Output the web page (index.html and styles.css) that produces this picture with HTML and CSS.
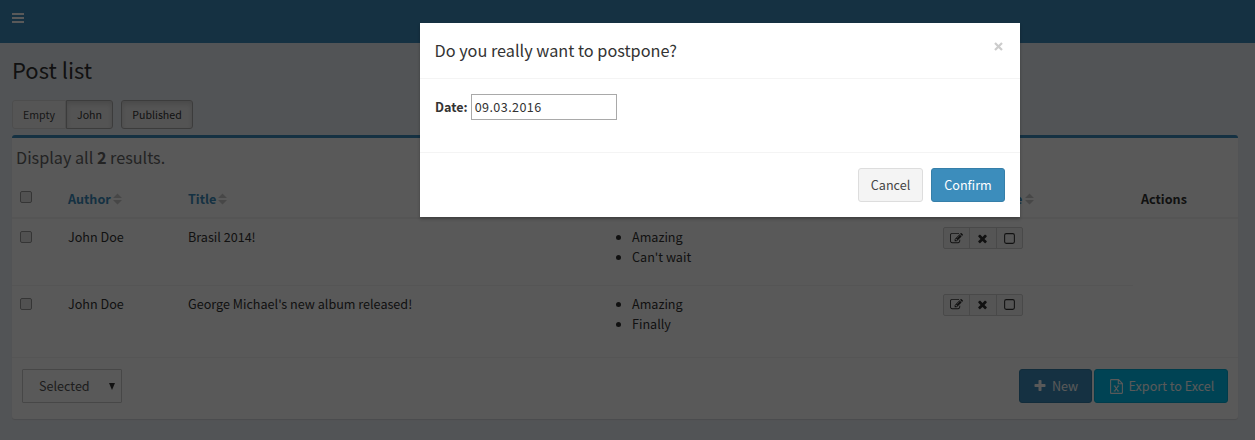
FILE: index.html
```html
<!DOCTYPE html>
<html lang="en">
<head>
<meta charset="utf-8">
<title>Post list</title>
<link rel="stylesheet" href="styles.css">
</head>
<body>
<svg class="sprite" aria-hidden="true">
  <symbol id="edit" viewBox="0 0 1792 1792"><path d="M888 1184l116-116-152-152-116 116v56h96v96h56zm440-720q-16-16-33 1l-350 350q-17 17-1 33t33-1l350-350q17-17 1-33zm80 594v190q0 119-84.500 203.500t-203.500 84.500h-832q-119 0-203.500-84.500t-84.500-203.500v-832q0-119 84.500-203.500t203.500-84.500h832q63 0 117 25 15 7 18 23 3 17-9 29l-49 49q-14 14-32 8-23-6-45-6h-832q-66 0-113 47t-47 113v832q0 66 47 113t113 47h832q66 0 113-47t47-113v-126q0-13 9-22l64-64q15-15 35-7t20 29zm-96-738l288 288-672 672h-288v-288zm444 132l-92 92-288-288 92-92q28-28 68-28t68 28l152 152q28 28 28 68t-28 68z"/></symbol>
  <symbol id="times" viewBox="0 0 1792 1792"><path d="M1490 1322q0 40-28 68l-136 136q-28 28-68 28t-68-28l-294-294-294 294q-28 28-68 28t-68-28l-136-136q-28-28-28-68t28-68l294-294-294-294q-28-28-28-68t28-68l136-136q28-28 68-28t68 28l294 294 294-294q28-28 68-28t68 28l136 136q28 28 28 68t-28 68l-294 294 294 294q28 28 28 68z"/></symbol>
  <symbol id="plus" viewBox="0 0 1792 1792"><path d="M1600 736v192q0 40-28 68t-68 28h-416v416q0 40-28 68t-68 28h-192q-40 0-68-28t-28-68v-416h-416q-40 0-68-28t-28-68v-192q0-40 28-68t68-28h416v-416q0-40 28-68t68-28h192q40 0 68 28t28 68v416h416q40 0 68 28t28 68z"/></symbol>
  <symbol id="square" viewBox="0 0 12 12"><rect x="1.500" y="1.500" width="9" height="9" rx="1.500" fill="none" stroke="currentColor"/></symbol>
  <symbol id="sort" viewBox="0 0 9 12"><path d="M0 5L4.500 .5L9 5zM0 7H9L4.500 11.500z"/></symbol>
  <symbol id="cross" viewBox="0 0 9 9"><path d="M1 1L8 8M8 1L1 8" fill="none" stroke="currentColor" stroke-width="2.200"/></symbol>
  <symbol id="excel" viewBox="0 0 13 15"><path d="M1.200 .6H8.500L12.400 4.500V13.800Q12.400 14.400 11.800 14.400H1.200Q.6 14.400 .6 13.800V1.200Q.6 .6 1.200 .6zM8.300 .6V4.700H12.400" fill="none" stroke="currentColor" stroke-width="1.100"/><path d="M4.500 7L8 12M8.300 7L4.600 12M3.700 7H5.600M7.300 7H9.200M3.700 12H5.600M7.200 12H9.200" fill="none" stroke="currentColor" stroke-width="1.200"/></symbol>
</svg>

<header class="navbar"><span class="menu"><i></i><i></i><i></i></span></header>
<main class="content">
  <h1>Post list</h1>
  <div class="filters">
    <div class="group"><button class="btn-filter">Empty</button><button class="btn-filter active">John</button></div>
    <button class="btn-filter active single">Published</button>
  </div>
  <section class="box">
    <p class="summary">Display all <b>2</b> results.</p>
    <table class="grid">
      <colgroup><col class="c-check"><col class="c-author"><col class="c-title"><col class="c-tags"><col class="c-date"><col class="c-actions"></colgroup>
      <thead>
        <tr>
          <th><span class="check"></span></th>
          <th><a>Author<svg class="sort"><use href="#sort"/></svg></a></th>
          <th><a>Title<svg class="sort"><use href="#sort"/></svg></a></th>
          <th></th>
          <th><a class="date-link">Publish date<svg class="sort"><use href="#sort"/></svg></a></th>
          <th>Actions</th>
        </tr>
      </thead>
      <tbody>
        <tr>
          <td><span class="check"></span></td><td>John Doe</td><td>Brasil 2014!</td>
          <td><ul><li>Amazing</li><li>Can't wait</li></ul></td>
          <td><div class="tools"><span><svg><use href="#edit"/></svg></span><span><svg><use href="#times"/></svg></span><span><svg><use href="#square"/></svg></span></div></td>
        </tr>
        <tr>
          <td><span class="check"></span></td><td>John Doe</td><td>George Michael's new album released!</td>
          <td><ul><li>Amazing</li><li>Finally</li></ul></td>
          <td><div class="tools"><span><svg><use href="#edit"/></svg></span><span><svg><use href="#times"/></svg></span><span><svg><use href="#square"/></svg></span></div></td>
        </tr>
      </tbody>
    </table>
    <footer class="box-footer">
      <div class="select"><span>Selected</span><i class="arrow"></i></div>
      <div class="actions">
        <button class="btn primary new"><svg class="ico-plus"><use href="#plus"/></svg>New</button>
        <button class="btn info"><svg class="ico-excel"><use href="#excel"/></svg>Export to Excel</button>
      </div>
    </footer>
  </section>
</main>

<div class="backdrop"></div>
<div class="modal" role="dialog">
  <div class="modal-header"><h4>Do you really want to postpone?</h4><svg class="close"><use href="#cross"/></svg></div>
  <div class="modal-body"><label>Date:</label><div class="input">09.03.2016</div></div>
  <div class="modal-footer"><button class="btn default">Cancel</button><button class="btn primary confirm">Confirm</button></div>
</div>
</body>
</html>
```
FILE: styles.css
```css
* { box-sizing: border-box; }
body {
  margin: 0;
  height: 440px;
  overflow: hidden;
  position: relative;
  background: #ecf0f5;
  color: #333;
  font: 12.600px/20px "Noto Sans CJK SC", "Open Sans", sans-serif;
}
svg { fill: currentColor; display: block; flex-shrink: 0; }
.sprite { position: absolute; width: 0; height: 0; }
button { font: inherit; color: inherit; margin: 0; padding: 0; }

.navbar { height: 43px; background: #3c8dbc; padding: 13px 12px; color: #fff; }
.menu { display: flex; flex-direction: column; gap: 2px; width: 12px; }
.menu i { height: 2px; background: #fff; }

.content { padding: 13px 17px 0 12px; }
h1 { margin: 0; font-size: 22px; line-height: 26px; font-weight: 400; }
.filters { display: flex; gap: 8px; margin-top: 18px; }
.group { display: flex; }
.btn-filter {
  height: 29px;
  width: 54px;
  font-size: 10.600px;
  background: #f4f4f4;
  border: 1px solid #ddd;
  border-radius: 3px 0 0 3px;
  color: #444;
}
.btn-filter.active {
  width: 47px;
  border-color: #adadad;
  background: #f0f0f0;
  border-radius: 0 3px 3px 0;
  box-shadow: inset 0 3px 5px rgba(0,0,0,.125);
  color: #333;
}
.btn-filter.single { width: 72px; border-radius: 3px; }

.box {
  margin-top: 6px;
  height: 284px;
  border-top: 3px solid #3c8dbc;
  border-radius: 3px;
  background: #fff;
  box-shadow: 0 1px 1px rgba(0,0,0,.1);
}
.summary { margin: 0; padding: 7px 4px 0; height: 42px; font-size: 16.200px; line-height: 24px; color: #666; }

.grid { width: 100%; table-layout: fixed; border-collapse: collapse; }
.c-check { width: 48px; }
.c-author { width: 120px; }
.c-title { width: 404px; }
.c-tags { width: 351px; }
.c-date { width: 198px; }
th, td { padding: 8px; text-align: left; vertical-align: top; }
th { height: 38px; padding-top: 9px; border-bottom: 2px solid #f4f4f4; }
td { height: 67px; padding-top: 8px; border-bottom: 1px solid #f4f4f4; }
tbody tr:last-child td { height: 72px; border-bottom: 0; }
th a { display: flex; align-items: center; gap: 2px; color: #3c8dbc; white-space: nowrap; }
.date-link { letter-spacing: .2px; }
.sort { width: 9px; height: 12px; margin-bottom: 1px; color: #ccc; }
.check {
  display: block;
  width: 12px;
  height: 12px;
  margin-top: 4px;
  border: 1px solid #999;
  border-radius: 2px;
  background: #e8e8e8;
}
th .check { margin-top: 2px; }
ul { margin: 0; padding-left: 40px; }
li::marker { font-size: 12.200px; }
.tools { display: flex; width: 80px; height: 22px; border: 1px solid #d2d2d2; border-radius: 2px; background: #f4f4f4; }
.tools span { flex: 1; display: flex; align-items: center; justify-content: center; border-left: 1px solid #d2d2d2; }
.tools span:first-child { border-left: 0; }
.tools svg { width: 13px; height: 13px; }

.box-footer { display: flex; justify-content: space-between; padding: 11px 10px 0; border-top: 1px solid #f4f4f4; }
.select { display: flex; align-items: center; justify-content: space-between; width: 100px; height: 34px; padding: 0 6px 0 16px; border: 1px solid #ccc; border-radius: 1px; color: #555; }
.arrow { border: 3.500px solid transparent; border-top: 7px solid #333; border-bottom: 0; }
.actions { display: flex; gap: 2px; }

.btn { display: flex; align-items: center; justify-content: center; height: 34px; border: 1px solid #367fa9; border-radius: 3px; }
.primary { background: #3c8dbc; color: #fff; }
.info { width: 134px; gap: 6px; padding-left: 2px; background: #00c0ef; border-color: #00acd6; color: #fff; }
.new { width: 73px; gap: 5px; }
.ico-plus { width: 14px; height: 14px; }
.ico-excel { width: 13px; height: 15px; }
.default { width: 65px; background: #f4f4f4; border-color: #ddd; color: #444; }
.confirm { width: 74px; }

.backdrop { position: absolute; inset: 0; background: rgba(0,0,0,.65); }
.modal { position: absolute; left: 420px; top: 23px; width: 600px; height: 194px; background: #fff; box-shadow: 0 2px 3px rgba(0,0,0,.25); }
.modal-header { display: flex; justify-content: space-between; height: 56px; padding: 15px 17px 0 14.500px; border-bottom: 1px solid #f4f4f4; }
h4 { margin: 0; font-size: 16.250px; line-height: 25px; font-weight: 400; }
.close { width: 9px; height: 9px; margin-top: 4px; color: #ccc; }
.modal-body { display: flex; align-items: center; gap: 3px; height: 73px; padding: 0 15px 17px; }
.modal-body label { font-weight: 700; }
.input { width: 146px; height: 26px; padding: 2px 3px; border: 1px solid #a9a9a9; letter-spacing: .4px; }
.modal-footer { display: flex; justify-content: flex-end; gap: 8px; height: 65px; padding: 15px; border-top: 1px solid #f4f4f4; }
```
